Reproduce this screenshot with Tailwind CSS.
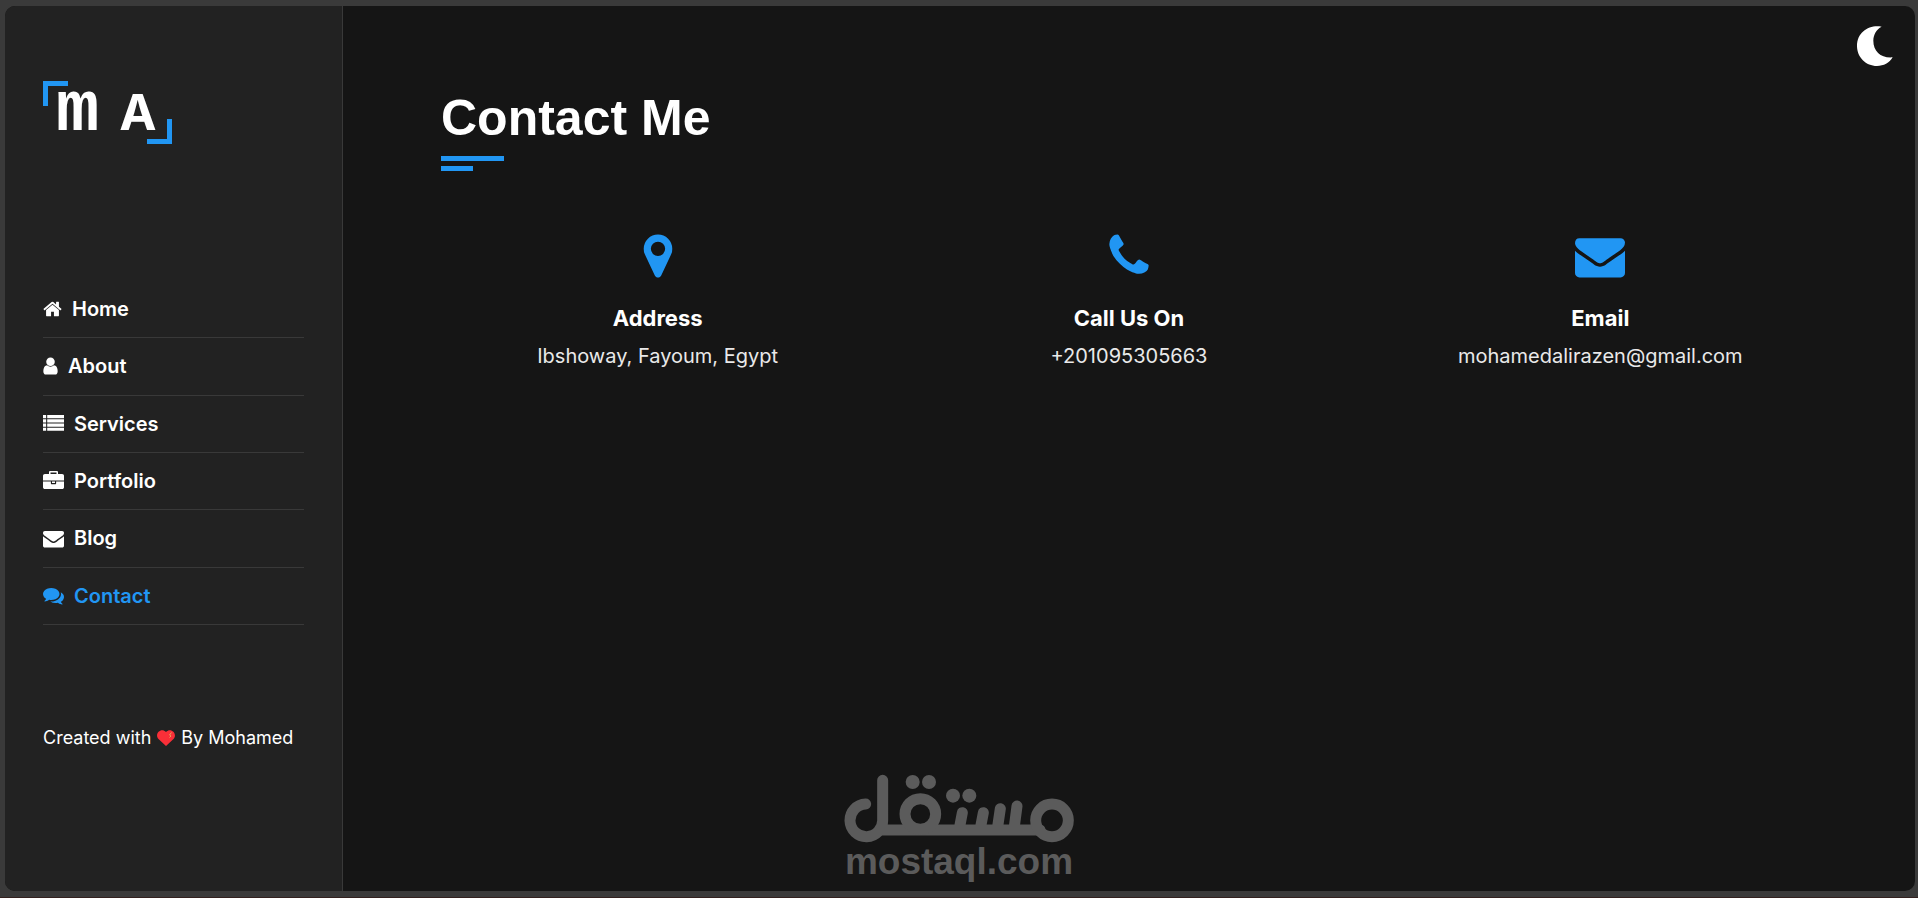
<!DOCTYPE html>
<html lang="en">
<head>
<meta charset="utf-8">
<meta name="viewport" content="width=device-width, initial-scale=1">
<title>Contact Me</title>
<script src="https://cdn.jsdelivr.net/npm/@tailwindcss/browser@4"></script>
</head>
<body class="min-h-screen flex flex-col bg-[#3a3a3a] text-white border-b border-[#33211f] font-['Inter',sans-serif]">
<div class="relative flex flex-1 mt-[6px] mb-[6px] ml-[5px] mr-[3px] rounded-[10px] overflow-hidden bg-[#151515]">
  <aside class="w-[338px] shrink-0 bg-[#222222] border-r border-[#393939] pl-[38px] pr-[38px] pt-[75px]">
    <a href="#" aria-label="Home page" class="relative flex items-start w-[129px] h-[63px] pl-[13px] pt-[7px] leading-none">
      <span class="absolute left-0 top-0 size-[25px] border-t-5 border-l-5 border-[#2196f3]"></span>
      <span class="absolute right-0 bottom-0 size-[25px] border-b-5 border-r-5 border-[#2196f3]"></span>
      <span class="flex items-baseline gap-5 h-[46px] leading-[46px]"><span class="text-[72px] font-bold font-['Liberation_Mono',monospace]">m</span><span class="text-[50px] font-bold">A</span></span>
    </a>
    <nav class="mt-[137px]">
      <ul class="grid grid-rows-6 h-[344px] text-[20px] font-semibold">
        <li class="border-b border-[#393939]"><a href="#home" class="flex items-center gap-[10px] h-full"><svg class="h-5 w-[19px]" viewBox="64 0 1664 1792" fill="currentColor"><path d="M1472 992v480q0 26-19 45t-45 19h-384v-384h-256v384h-384q-26 0-45-19t-19-45v-480q0-1 .5-3t.5-3l575-474 575 474q1 2 1 6zm223-69l-62 74q-8 9-21 11h-3q-13 0-21-7l-692-577-692 577q-12 8-24 7-13-2-21-11l-62-74q-8-10-7-23.5t11-21.5l719-599q32-26 76-26t76 26l244 204v-195q0-14 9-23t23-9h192q14 0 23 9t9 23v408l219 182q10 8 11 21.5t-7 23.5z"/></svg>Home</a></li>
        <li class="border-b border-[#393939]"><a href="#about" class="flex items-center gap-[10px] h-full"><svg class="h-5 w-[15px]" viewBox="256 0 1280 1792" fill="currentColor"><path d="M1536 1399q0 109-62.500 187t-150.500 78h-854q-88 0-150.500-78t-62.500-187q0-85 8.500-160.500t31.500-152 58.500-131 94-89 134.500-34.500q131 128 313 128t313-128q76 0 134.500 34.500t94 89 58.500 131 31.500 152 8.500 160.500zm-256-887q0 159-112.500 271.500t-271.500 112.500-271.500-112.500-112.500-271.500 112.500-271.500 271.500-112.500 271.500 112.500 112.500 271.500z"/></svg>About</a></li>
        <li class="border-b border-[#393939]"><a href="#services" class="flex items-center gap-[10px] h-full"><svg class="size-[21px]" viewBox="0 0 20 20" fill="currentColor"><path d="M0 2h3v3H0zM4 2h16v3H4zM0 6h3v3H0zM4 6h16v3H4zM0 10h3v3H0zM4 10h16v3H4zM0 14h3v3H0zM4 14h16v3H4z"/></svg>Services</a></li>
        <li class="border-b border-[#393939]"><a href="#portfolio" class="flex items-center gap-[10px] h-full"><svg class="size-[21px]" viewBox="0 0 1792 1792" fill="currentColor"><path d="M640 256h512v-128h-512v128zm1152 640v480q0 66-47 113t-113 47h-1472q-66 0-113-47t-47-113v-480h672v160q0 26 19 45t45 19h320q26 0 45-19t19-45v-160h672zm-768 0v128h-256v-128h256zm768-480v384h-1792v-384q0-66 47-113t113-47h352v-160q0-40 28-68t68-28h576q40 0 68 28t28 68v160h352q66 0 113 47t47 113z"/></svg>Portfolio</a></li>
        <li class="border-b border-[#393939]"><a href="#blog" class="flex items-center gap-[10px] h-full"><svg class="size-[21px]" viewBox="0 0 1792 1792" fill="currentColor"><path d="M1792 710v794q0 66-47 113t-113 47h-1472q-66 0-113-47t-47-113v-794q44 49 101 87 362 246 497 345 57 42 92.500 65.500t94.500 48 110 24.500h2q51 0 110-24.500t94.500-48 92.500-65.500q170-123 498-345 57-39 100-87zm0-294q0 79-49 151t-122 123q-376 261-468 325-10 7-42.500 31t-54 38.500-52 32.500-57.500 27-50 9h-2q-23 0-50-9t-57.500-27-52-32.500-54-38.500-42.500-31q-91-64-262-182.500t-205-142.500q-62-42-117-115.500t-55-136.500q0-78 41.500-130t118.500-52h1472q65 0 112.500 47t47.500 113z"/></svg>Blog</a></li>
        <li class="border-b border-[#393939]"><a href="#contact" aria-current="page" class="flex items-center gap-[10px] h-full text-[#2196f3]"><svg class="size-[21px]" viewBox="0 0 1792 1792" fill="currentColor"><path d="M1408 768q0 139-94 257t-256.500 186.500-353.500 68.500q-86 0-176-16-124 88-278 128-36 9-86 16h-3q-11 0-20.500-8t-11.500-21q-1-3-1-6.500t.5-6.500 2-6l2.500-5 3.500-5.500 4-5 4.500-5 4-4.500q5-6 23-25t26-29.500 22.500-29 25-38.500 20.500-44q-124-72-195-177t-71-224q0-139 94-257t256.500-186.500 353.500-68.500 353.500 68.500 256.500 186.500 94 257zm384 256q0 120-71 224.500t-195 176.500q10 24 20.500 44t25 38.500 22.500 29 26 29.500 23 25q1 1 4 4.500t4.500 5 4 5 3.500 5.500l2.500 5 2 6 .5 6.500-1 6.500q-3 14-13 22t-22 7q-50-7-86-16-154-40-278-128-90 16-176 16-271 0-472-132 58 4 88 4 161 0 309-45t264-129q125-92 192-212t67-254q0-77-23-152 129 71 204 178t75 230z"/></svg>Contact</a></li>
      </ul>
    </nav>
    <p class="mt-[99px] flex items-center text-[18px] leading-7 whitespace-nowrap">Created with<svg class="w-[18px] h-4 mx-[6px]" viewBox="0 0 18 16"><path d="M9 16 1.500 9C-3 4 4-3 9 2c5-5 12 2 7.500 7z" fill="#f92f38"/><path d="M14.500 2.500l-2 2.500 1.500 1-1.500 1.500" fill="none" stroke="#e8a05a"/></svg>By Mohamed</p>
  </aside>

  <main class="flex-1 px-[79px] pt-[84px]">
    <header class="px-[19px]">
      <h1 class="text-[50px] leading-[56px] font-bold font-['Liberation_Sans',Arial,sans-serif]">Contact Me</h1>
      <div class="mt-[10px] w-[63px] h-[5px] bg-[#2196f3]"></div>
      <div class="mt-[5px] w-8 h-[5px] bg-[#2196f3]"></div>
    </header>
    <section class="mt-[60px] grid grid-cols-3 text-center">
      <div class="flex flex-col items-center">
        <svg class="size-[50px] text-[#2196f3]" viewBox="0 0 1792 1792" fill="currentColor"><path d="M1152 640q0-106-75-181t-181-75-181 75-75 181 75 181 181 75 181-75 75-181zm256 0q0 109-33 179l-364 774q-16 33-47.500 52t-67.500 19-67.500-19-46.500-52l-365-774q-33-70-33-179 0-212 150-362t362-150 362 150 150 362z"/></svg>
        <h2 class="mt-[23px] text-[22px] leading-7 font-bold">Address</h2>
        <p class="mt-[10px] text-[20px] leading-7 text-[#e9e9e9]">Ibshoway, Fayoum, Egypt</p>
      </div>
      <div class="flex flex-col items-center">
        <svg class="size-[50px] text-[#2196f3]" viewBox="0 0 1792 1792" fill="currentColor"><path d="M1600 1240q0 27-10 70.500t-21 68.500q-21 50-122 106-94 51-186 51-27 0-52.500-3.500t-57.500-12.500-47.500-14.500-55.500-20.500-49-18q-98-35-175-83-128-79-264.500-215.500t-215.500-264.500q-48-77-83-175-3-9-18-49t-20.500-55.500-14.500-47.500-12.500-57.500-3.500-52.500q0-92 51-186 56-101 106-122 25-11 68.500-21t70.500-10q14 0 21 3 18 6 53 76 11 19 30 54t35 63.500 31 53.500q3 4 17.500 25t21.500 35.500 7 28.500q0 20-28.500 50t-62 55-62 53-28.500 46q0 9 5 22.500t8.500 20.500 14 24 11.500 19q76 137 174 235t235 174q2 1 19 11.500t24 14 20.500 8.500 22.500 5q18 0 46-28.500t53-62 55-62 50-28.500q14 0 28.500 7t35.500 21.500 25 17.500q25 15 53.500 31t63.500 35 54 30q70 35 76 53 3 7 3 21z"/></svg>
        <h2 class="mt-[23px] text-[22px] leading-7 font-bold">Call Us On</h2>
        <p class="mt-[10px] text-[20px] leading-7 text-[#e9e9e9]">+201095305663</p>
      </div>
      <div class="flex flex-col items-center">
        <svg class="size-[50px] text-[#2196f3]" viewBox="0 0 1792 1792" fill="currentColor"><path d="M1792 710v794q0 66-47 113t-113 47h-1472q-66 0-113-47t-47-113v-794q44 49 101 87 362 246 497 345 57 42 92.500 65.500t94.500 48 110 24.500h2q51 0 110-24.500t94.500-48 92.500-65.500q170-123 498-345 57-39 100-87zm0-294q0 79-49 151t-122 123q-376 261-468 325-10 7-42.500 31t-54 38.500-52 32.500-57.500 27-50 9h-2q-23 0-50-9t-57.500-27-52-32.500-54-38.500-42.500-31q-91-64-262-182.500t-205-142.500q-62-42-117-115.500t-55-136.500q0-78 41.500-130t118.500-52h1472q65 0 112.500 47t47.500 113z"/></svg>
        <h2 class="mt-[23px] text-[22px] leading-7 font-bold">Email</h2>
        <p class="mt-[10px] text-[20px] leading-7 text-[#e9e9e9]">mohamedalirazen@gmail.com</p>
      </div>
    </section>
  </main>

  <button type="button" aria-label="Toggle dark mode" class="absolute right-[22px] top-5 cursor-pointer">
    <svg class="w-9 h-10" viewBox="232 78 108 120" fill="#fff"><path d="M306 80C270 73 232 95 232 138c0 34 27 60 60 60 20 0 37-9 47-26-34 3-58-17-58-50 0-18 9-34 25-42z"/></svg>
  </button>

  <!-- Marketplace watermark -->
  <div class="absolute left-1/2 -translate-x-1/2 bottom-[10px] pr-[2px] flex flex-col items-center text-[#5b5b5b]">
    <svg class="w-[230px] h-[69px]" viewBox="72 70 690 207" fill="none" stroke="currentColor" stroke-width="33" stroke-linecap="round">
      <path d="M137 160A49 49 0 1 0 188 208V89M188 238H660M419 228l8-42M482 228l8-42M533 228l8-54M583 228l8-62"/>
      <circle cx="301" cy="190" r="46"/><circle cx="696" cy="209" r="49"/>
      <g fill="currentColor" stroke="none"><circle cx="278" cy="94" r="21"/><circle cx="327" cy="94" r="21"/><circle cx="399" cy="135" r="21"/><circle cx="448" cy="135" r="21"/></g>
    </svg>
    <span class="text-[37px] leading-[38px] font-bold font-['Liberation_Sans',Arial,sans-serif]">mostaql.com</span>
  </div>
</div>
</body>
</html>
